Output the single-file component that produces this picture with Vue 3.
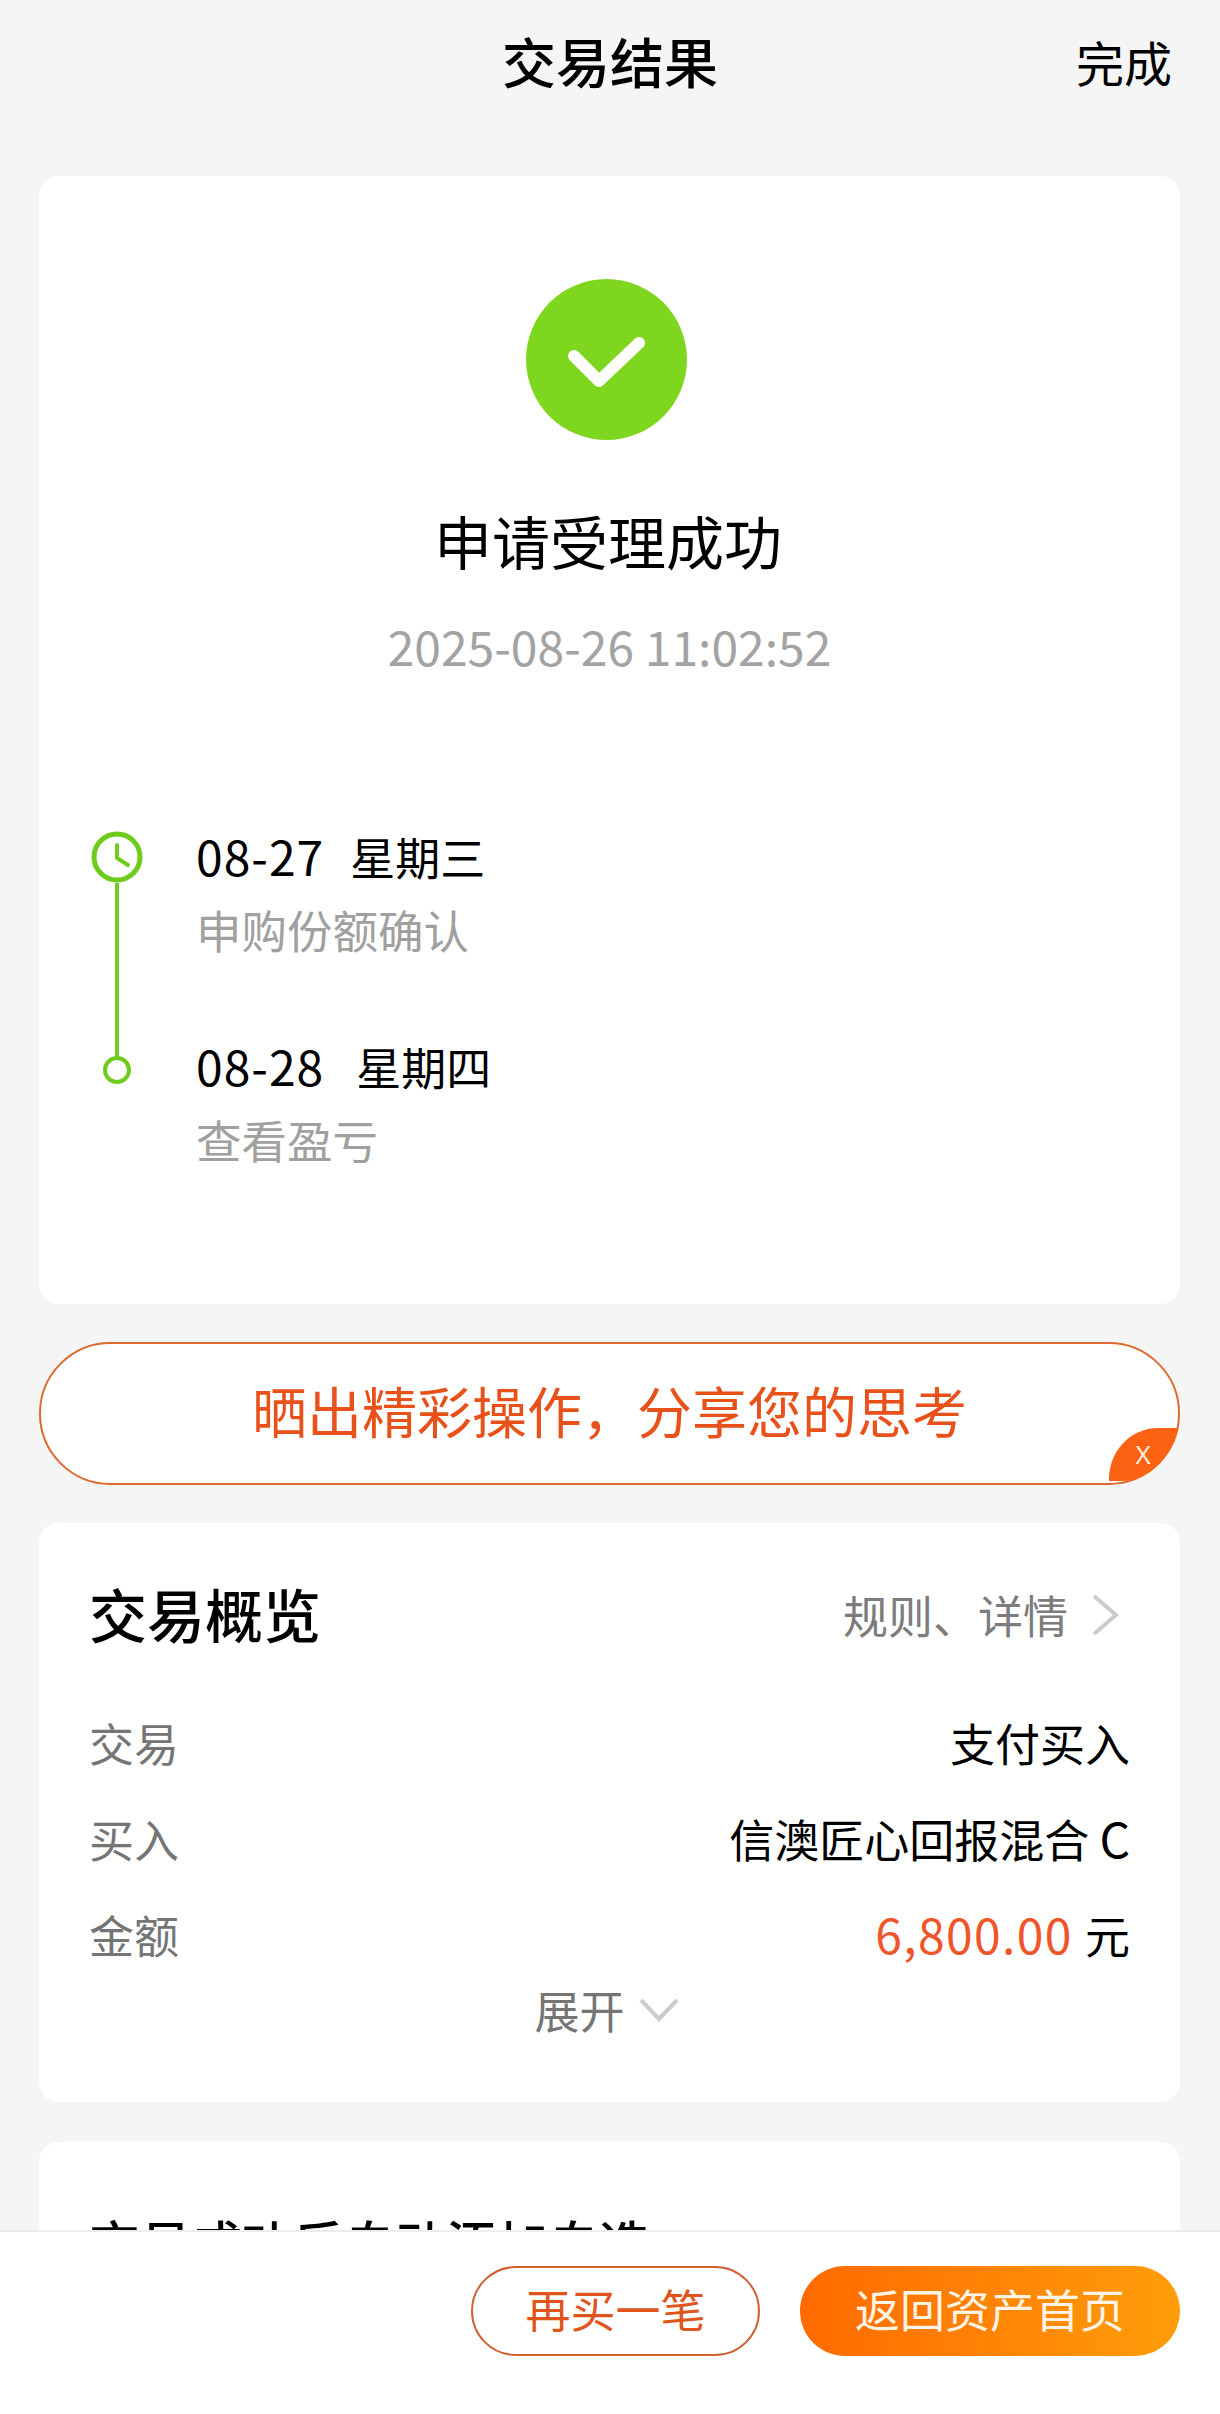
<script setup>
const overview = [
  { label: '交易', value: '支付买入' },
  { label: '买入', value: '信澳匠心回报混合', suffix: 'C' },
  { label: '金额', amount: '6,800.00', unit: '元' }
]
</script>

<template>
  <div class="page">
    <div class="scroll">
      <header class="nav">
        <span></span>
        <h1 class="nav-title">交易结果</h1>
        <span class="nav-done">完成</span>
      </header>

      <section class="card result">
        <svg class="ok" viewBox="0 0 161 161" width="161" height="161">
          <circle cx="80.5" cy="80.5" r="80.5" fill="#7fd61f" />
          <path d="M48 77 73 102 113 64" fill="none" stroke="#fff" stroke-width="12" stroke-linecap="round" stroke-linejoin="round" />
        </svg>
        <h2 class="result-title">申请受理成功</h2>
        <p class="result-time">2025-08-26 11:02:52</p>

        <div class="timeline">
          <div class="rail">
            <svg viewBox="0 0 52 52" width="52" height="52">
              <circle cx="26" cy="26" r="23" fill="#fff" stroke="#70cc1c" stroke-width="5" />
              <path d="M26 14V27L37 34" fill="none" stroke="#70cc1c" stroke-width="4" stroke-linecap="round" stroke-linejoin="round" />
            </svg>
            <i class="rail-line"></i>
            <i class="rail-dot"></i>
          </div>
          <div class="steps">
            <div class="step">
              <div class="step-date">08-27<span>星期三</span></div>
              <div class="step-note">申购份额确认</div>
            </div>
            <div class="step">
              <div class="step-date">08-28<span>星期四</span></div>
              <div class="step-note">查看盈亏</div>
            </div>
          </div>
        </div>
      </section>

      <section class="share">
        <span>晒出精彩操作，分享您的思考</span>
        <div class="share-close">
          <svg viewBox="0 0 70 54" width="70" height="54">
            <path d="M1 54C0 25 22 1 50 1H70C66 24 45 54 14 54Z" fill="#fb6214" />
          </svg>
          <em>X</em>
        </div>
      </section>

      <section class="card overview">
        <div class="overview-head">
          <h3>交易概览</h3>
          <div class="overview-link">
            规则、详情
            <svg viewBox="0 0 28 42" width="28" height="42">
              <path d="M3 2 25 21 3 40" fill="none" stroke="#ccc" stroke-width="4" />
            </svg>
          </div>
        </div>
        <div class="rows">
          <div v-for="row in overview" :key="row.label" class="row">
            <span class="row-label">{{ row.label }}</span>
            <span class="row-value">
              <template v-if="row.amount"><b>{{ row.amount }}</b> {{ row.unit }}</template>
              <template v-else>{{ row.value }}<i v-if="row.suffix">{{ row.suffix }}</i></template>
            </span>
          </div>
        </div>
        <div class="expand">
          展开
          <svg viewBox="0 0 40 24" width="40" height="24">
            <path d="M2 2 20 21 38 2" fill="none" stroke="#ccc" stroke-width="4" />
          </svg>
        </div>
      </section>

      <section class="card watch">
        <h3>交易成功后自动添加自选</h3>
      </section>
    </div>

    <footer class="actions">
      <button class="btn btn-line">再买一笔</button>
      <button class="btn btn-fill">返回资产首页</button>
    </footer>
  </div>
</template>

<style>
body {
  background: #f5f5f5;
}
</style>

<style scoped>
.page {
  display: flex;
  flex-direction: column;
  width: 1220px;
  height: 2414px;
  overflow: hidden;
  background: #f5f5f5;
  color: #000;
  font-family: "Noto Sans CJK SC", "Noto Sans", sans-serif;
}
.scroll {
  flex: 1;
  min-height: 0;
  overflow: hidden;
  padding: 0 40px 0 39px;
}
h1, h2, h3, p {
  margin: 0;
  font-weight: 400;
}
.nav {
  display: grid;
  grid-template-columns: 1fr auto 1fr;
  align-items: center;
  height: 122px;
  margin: 0 -40px 54px -39px;
  padding: 0 48px;
}
.nav-title {
  font-size: 54px;
  font-weight: 500;
  line-height: 70px;
}
.nav-done {
  justify-self: end;
  font-size: 48px;
  line-height: 70px;
}
.card {
  background: #fff;
  border-radius: 20px;
}
.result {
  display: flex;
  flex-direction: column;
  align-items: center;
  height: 1128px;
  padding-top: 103px;
  box-sizing: border-box;
}
.ok {
  display: block;
  margin-right: 6px;
}
.result-title {
  margin: 65px 3px 0 0;
  font-size: 58px;
  line-height: 70px;
}
.result-time {
  margin-top: 40px;
  font-size: 48px;
  line-height: 60px;
  color: #a3a3a3;
}
.timeline {
  align-self: stretch;
  display: flex;
  gap: 53px;
  margin-top: 150px;
  padding-left: 52px;
}
.rail {
  display: flex;
  flex-direction: column;
  align-items: center;
  width: 52px;
  padding: 6px 0 85px;
}
.rail svg {
  display: block;
  flex: none;
}
.rail-line {
  flex: 1;
  width: 4px;
  background: #70cc1c;
}
.rail-dot {
  flex: none;
  width: 28px;
  height: 28px;
  box-sizing: border-box;
  border: 4px solid #70cc1c;
  border-radius: 50%;
}
.step + .step {
  margin-top: 76px;
}
.step-date {
  font-size: 48px;
  line-height: 60px;
  letter-spacing: 1px;
}
.step-date span {
  margin-left: 26px;
  font-size: 45px;
  letter-spacing: 0;
}
.step + .step .step-date span {
  margin-left: 32px;
}
.step-note {
  margin-top: 12px;
  font-size: 45.5px;
  line-height: 60px;
  color: #a0a0a0;
}
.share {
  position: relative;
  display: flex;
  align-items: center;
  justify-content: center;
  height: 143px;
  margin-top: 38px;
  padding-bottom: 10px;
  box-sizing: border-box;
  border: 2px solid #dd6a2e;
  border-radius: 72px;
  background: #fff;
  color: #e8511a;
  font-size: 55px;
  line-height: 70px;
}
.share-close {
  position: absolute;
  right: 0;
  bottom: 2px;
  width: 70px;
  height: 54px;
}
.share-close svg {
  display: block;
}
.share-close em {
  position: absolute;
  left: 20px;
  top: 10px;
  width: 30px;
  text-align: center;
  font-family: "Noto Sans", sans-serif;
  font-style: normal;
  font-size: 26px;
  line-height: 34px;
  color: #ffe9d8;
}
.overview {
  margin-top: 38px;
  padding: 55px 50px 62px;
}
.overview-head {
  display: flex;
  align-items: center;
  justify-content: space-between;
}
.overview-head h3 {
  font-size: 58px;
  font-weight: 500;
  line-height: 70px;
}
.overview-link {
  display: flex;
  align-items: center;
  gap: 23px;
  margin-right: 11px;
  padding-top: 4px;
  font-size: 45px;
  line-height: 60px;
  color: #7c7c7c;
}
.overview-link svg {
  display: block;
}
.rows {
  display: flex;
  flex-direction: column;
  gap: 36px;
  margin-top: 65px;
}
.row {
  display: flex;
  align-items: center;
  justify-content: space-between;
  height: 60px;
  font-size: 45px;
  line-height: 60px;
}
.row-label {
  color: #757575;
}
.row-value b {
  margin-right: 2px;
  font-size: 48px;
  font-weight: 400;
  line-height: 1;
  letter-spacing: 1.4px;
  color: #f0552a;
}
.row-value i {
  margin-left: 10px;
  font-size: 48px;
  font-style: normal;
  line-height: 1;
}
.expand {
  display: flex;
  align-items: center;
  justify-content: center;
  gap: 14px;
  margin-top: 15px;
  padding-right: 6px;
  font-size: 45px;
  line-height: 60px;
  color: #757575;
}
.expand svg {
  display: block;
}
.watch {
  margin-top: 40px;
  padding: 65px 50px 0;
  height: 400px;
}
.watch h3 {
  font-size: 51px;
  font-weight: 500;
  line-height: 70px;
}
.actions {
  flex: none;
  display: flex;
  justify-content: flex-end;
  gap: 40px;
  height: 184px;
  box-sizing: border-box;
  padding: 34px 40px 0 0;
  border-top: 2px solid #ececec;
  background: #fff;
}
.btn {
  height: 90px;
  padding: 0 0 4px;
  border-radius: 45px;
  font-family: inherit;
  font-size: 45px;
  line-height: 60px;
}
.btn-line {
  width: 289px;
  border: 2px solid #cf6133;
  background: #fff;
  color: #e0551c;
}
.btn-fill {
  width: 380px;
  border: 0;
  background: linear-gradient(90deg, #ff6a00, #ff9d0a);
  color: #fff3e6;
}
</style>
